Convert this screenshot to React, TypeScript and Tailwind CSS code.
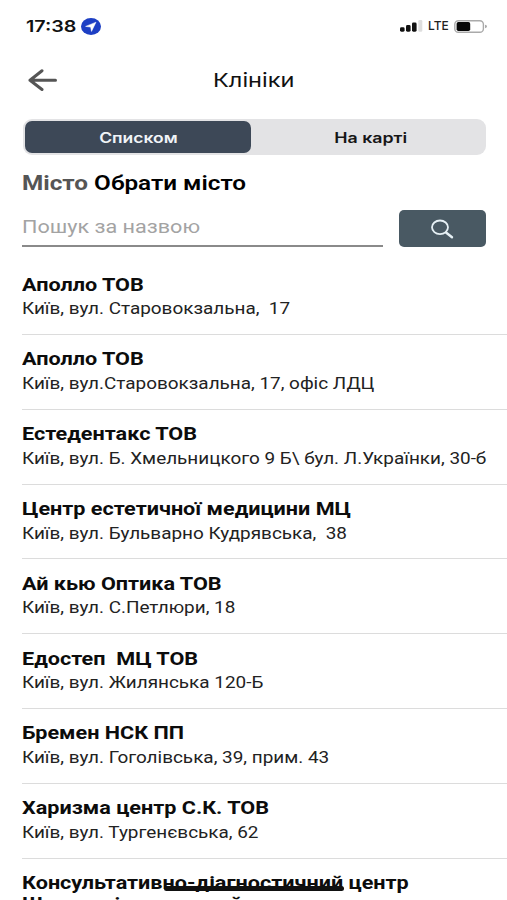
import React from 'react';

interface Clinic {
    name: string;
    address?: string;
}

const clinics: Clinic[] = [
    { name: 'Аполло ТОВ', address: 'Київ, вул. Старовокзальна,  17' },
    { name: 'Аполло ТОВ', address: 'Київ, вул.Старовокзальна, 17, офіс ЛДЦ' },
    { name: 'Естедентакс ТОВ', address: 'Київ, вул. Б. Хмельницкого 9 Б\\ бул. Л.Українки, 30-б' },
    { name: 'Центр естетичної медицини МЦ', address: 'Київ, вул. Бульварно Кудрявська,  38' },
    { name: 'Ай кью Оптика ТОВ', address: 'Київ, вул. С.Петлюри, 18' },
    { name: 'Едостеп  МЦ ТОВ', address: 'Київ, вул. Жилянська 120-Б' },
    { name: 'Бремен НСК ПП', address: 'Київ, вул. Гоголівська, 39, прим. 43' },
    { name: 'Харизма центр С.К. ТОВ', address: 'Київ, вул. Тургенєвська, 62' },
    { name: 'Консультативно-діагностичний центр\nШевченківського району' },
];

const StatusBar: React.FC = () => (
    <div className="flex h-[52px] shrink-0 items-center justify-between pl-[26px] pr-[20px] font-['Inter',sans-serif]">
        <div className="flex items-center">
            <span className="w-[55px] text-[16px] font-semibold leading-5 text-[#111]">
                <span className="inline-block origin-left scale-x-[1.23]">17:38</span>
            </span>
            <svg className="h-[17px] w-5" viewBox="0 0 20 17" preserveAspectRatio="none">
                <ellipse cx="10" cy="8.5" rx="10" ry="8.5" fill="#1d3fc4" />
                <path d="M15 4.2 4.6 8.4l5 .7.9 4.3z" fill="#fff" stroke="#fff" strokeWidth=".5" strokeLinejoin="round" />
            </svg>
        </div>
        <div className="flex items-center">
            <svg className="h-3 w-[23px]" viewBox="0 0 23 12">
                <rect x="0" y="7.3" width="4.6" height="4.4" rx="1.4" fill="#111" />
                <rect x="6" y="5" width="4.6" height="6.7" rx="1.4" fill="#111" />
                <rect x="12" y="2.5" width="4.6" height="9.2" rx="1.4" fill="#111" />
                <rect x="18.3" y="0" width="4" height="11.7" rx="1.2" fill="#dedede" />
            </svg>
            <span className="ml-[5px] w-[26px] text-[12px] font-medium leading-4 text-[#222]">LTE</span>
            <svg className="h-[13px] w-[33px]" viewBox="0 0 33 13">
                <rect x=".8" y=".7" width="28.6" height="11.6" rx="3.6" fill="#fff" stroke="#aaa" strokeWidth="1.4" />
                <rect x="2.6" y="2" width="13.6" height="9" rx="1.8" fill="#080808" />
                <path d="M31 4.8q2 .3 2 1.7t-2 1.7z" fill="#aaa" />
            </svg>
        </div>
    </div>
);

const Header: React.FC = () => (
    <header className="flex h-[56px] shrink-0 items-center pl-[28px]">
        <button aria-label="Назад">
            <svg className="h-6 w-[30px]" viewBox="0 0 30 24" fill="none" stroke="#555" strokeWidth="3" strokeLinecap="round" strokeLinejoin="round">
                <path d="M27.5 12.3H2M14 2.8 2 12.3l12 9.2" />
            </svg>
        </button>
        <h1 className="ml-[155px] whitespace-nowrap pt-[2px] font-['Inter',sans-serif] text-[19px] leading-6 text-[#111]">
            <span className="inline-block origin-left scale-x-[1.24]">Клініки</span>
        </h1>
    </header>
);

const Tabs: React.FC = () => (
    <div className="ml-[23px] mt-[11px] flex h-[36px] w-[463px] shrink-0 rounded-[9px] bg-[#e3e3e5] p-[2px] font-['Inter',sans-serif] text-[14px] font-semibold">
        <button className="w-[226px] rounded-[7px] bg-[#3d4857] text-[#f1f4f8]">
            <span className="inline-block scale-x-[1.25]">Списком</span>
        </button>
        <button className="flex-1 pl-[7px] text-[#161616]">
            <span className="inline-block scale-x-[1.27]">На карті</span>
        </button>
    </div>
);

const Search: React.FC = () => (
    <div className="ml-[22px] mt-[15px] flex h-[38px] shrink-0 items-start">
        <div className="flex h-[37px] w-[361px] items-center whitespace-nowrap border-b-2 border-[#8a8a8a] pb-[2px] text-[18px] text-[#a3a3a3]">
            <span className="inline-block origin-left scale-x-[1.2]">Пошук за назвою</span>
        </div>
        <button aria-label="Пошук" className="ml-4 flex h-[37px] w-[87px] items-center justify-center rounded-[5px] bg-[#495963] pr-[2px]">
            <svg className="h-5 w-6" viewBox="0 0 24 20" fill="none" stroke="#e6f0f5" strokeLinecap="round">
                <ellipse cx="10" cy="8.3" rx="8" ry="6.8" strokeWidth="1.8" />
                <path d="m16 13.5 6 4.8" strokeWidth="2.4" />
            </svg>
        </button>
    </div>
);

const ClinicRow: React.FC<{ clinic: Clinic }> = ({ clinic }) => (
    <li className="ml-[22px] h-[74.8px] shrink-0 whitespace-pre border-b border-[#dcdcdc] pt-[14.5px]">
        <p className="text-[17.5px] font-bold leading-[21px] text-[#0c0c0c]">
            <span className="inline-block origin-left scale-x-[1.235]">{clinic.name}</span>
        </p>
        {clinic.address && (
            <p className="mt-[1.5px] text-[16px] leading-[24px] text-[#222]">
                <span className="inline-block origin-left scale-x-[1.182]">{clinic.address}</span>
            </p>
        )}
    </li>
);

export default function App() {
    return (
        <div className="relative flex h-[900px] w-[507px] flex-col overflow-hidden bg-white font-['Roboto',sans-serif]">
            <StatusBar />
            <Header />
            <Tabs />
            <div className="ml-[22px] mt-[16px] flex h-6 shrink-0 whitespace-nowrap text-[20px] font-semibold leading-6 text-black">
                <span className="inline-block origin-left scale-x-[1.215]">
                    <span className="font-bold text-[#555]">Місто</span> Обрати місто
                </span>
            </div>
            <Search />
            <ul className="mt-[12.2px] flex shrink-0 flex-col">
                {clinics.map((clinic, i) => (
                    <ClinicRow key={i} clinic={clinic} />
                ))}
            </ul>
            <div className="absolute left-[164px] top-[886px] h-[5px] w-[180px] rounded-full bg-[#111]" />
        </div>
    );
}
